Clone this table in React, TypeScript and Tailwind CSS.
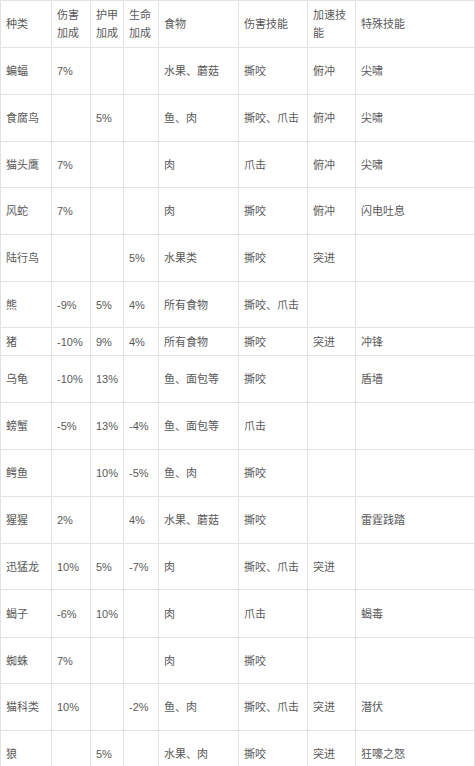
import React from "react";

type Row = {
  h: string;
  cells: string[];
};

const head = ["种类", "伤害加成", "护甲加成", "生命加成", "食物", "伤害技能", "加速技能", "特殊技能"];

const rows: Row[] = [
  { h: "h-[47px]", cells: ["蝙蝠", "7%", "", "", "水果、蘑菇", "撕咬", "俯冲", "尖啸"] },
  { h: "h-[47px]", cells: ["食腐鸟", "", "5%", "", "鱼、肉", "撕咬、爪击", "俯冲", "尖啸"] },
  { h: "h-[46px]", cells: ["猫头鹰", "7%", "", "", "肉", "爪击", "俯冲", "尖啸"] },
  { h: "h-[47px]", cells: ["风蛇", "7%", "", "", "肉", "撕咬", "俯冲", "闪电吐息"] },
  { h: "h-[47px]", cells: ["陆行鸟", "", "", "5%", "水果类", "撕咬", "突进", ""] },
  { h: "h-[46px]", cells: ["熊", "-9%", "5%", "4%", "所有食物", "撕咬、爪击", "", ""] },
  { h: "h-[28px]", cells: ["猪", "-10%", "9%", "4%", "所有食物", "撕咬", "突进", "冲锋"] },
  { h: "h-[47px]", cells: ["乌龟", "-10%", "13%", "", "鱼、面包等", "撕咬", "", "盾墙"] },
  { h: "h-[47px]", cells: ["螃蟹", "-5%", "13%", "-4%", "鱼、面包等", "爪击", "", ""] },
  { h: "h-[47px]", cells: ["鳄鱼", "", "10%", "-5%", "鱼、肉", "撕咬", "", ""] },
  { h: "h-[47px]", cells: ["猩猩", "2%", "", "4%", "水果、蘑菇", "撕咬", "", "雷霆践踏"] },
  { h: "h-[46px]", cells: ["迅猛龙", "10%", "5%", "-7%", "肉", "撕咬、爪击", "突进", ""] },
  { h: "h-[48px]", cells: ["蝎子", "-6%", "10%", "", "肉", "爪击", "", "蝎毒"] },
  { h: "h-[46px]", cells: ["蜘蛛", "7%", "", "", "肉", "撕咬", "", ""] },
  { h: "h-[47px]", cells: ["猫科类", "10%", "", "-2%", "鱼、肉", "撕咬、爪击", "突进", "潜伏"] },
  { h: "h-[47px]", cells: ["狼", "", "5%", "", "水果、肉", "撕咬", "突进", "狂嚎之怒"] },
];

const widths = [
  "w-[51px]",
  "w-[39px]",
  "w-[33px]",
  "w-[35px]",
  "w-[80px]",
  "w-[69px]",
  "w-[48px]",
  "w-[119px]",
];

const Cell = ({ text, i }: { text: string; i: number }) => (
  <div
    className={`${widths[i]} shrink-0 flex items-center border-r border-[#e2e2e2] pl-[5px] pr-[4px] leading-[18px] break-all`}
  >
    {text}
  </div>
);

export default function App() {
  return (
    <div
      className="w-[475px] h-[766px] overflow-hidden bg-white text-[11px] text-[#595959]"
      style={{ fontFamily: '"Liberation Sans", "Noto Sans CJK SC", sans-serif' }}
    >
      <div className="border-t border-l border-[#e2e2e2] flex flex-col">
        <div className="h-[47px] flex border-b border-[#e2e2e2] box-border">
          {head.map((t, i) => (
            <Cell key={i} text={t} i={i} />
          ))}
        </div>
        {rows.map((r, idx) => (
          <div key={idx} className={`${r.h} shrink-0 flex border-b border-[#e2e2e2] box-border`}>
            {r.cells.map((t, i) => (
              <Cell key={i} text={t} i={i} />
            ))}
          </div>
        ))}
      </div>
    </div>
  );
}
